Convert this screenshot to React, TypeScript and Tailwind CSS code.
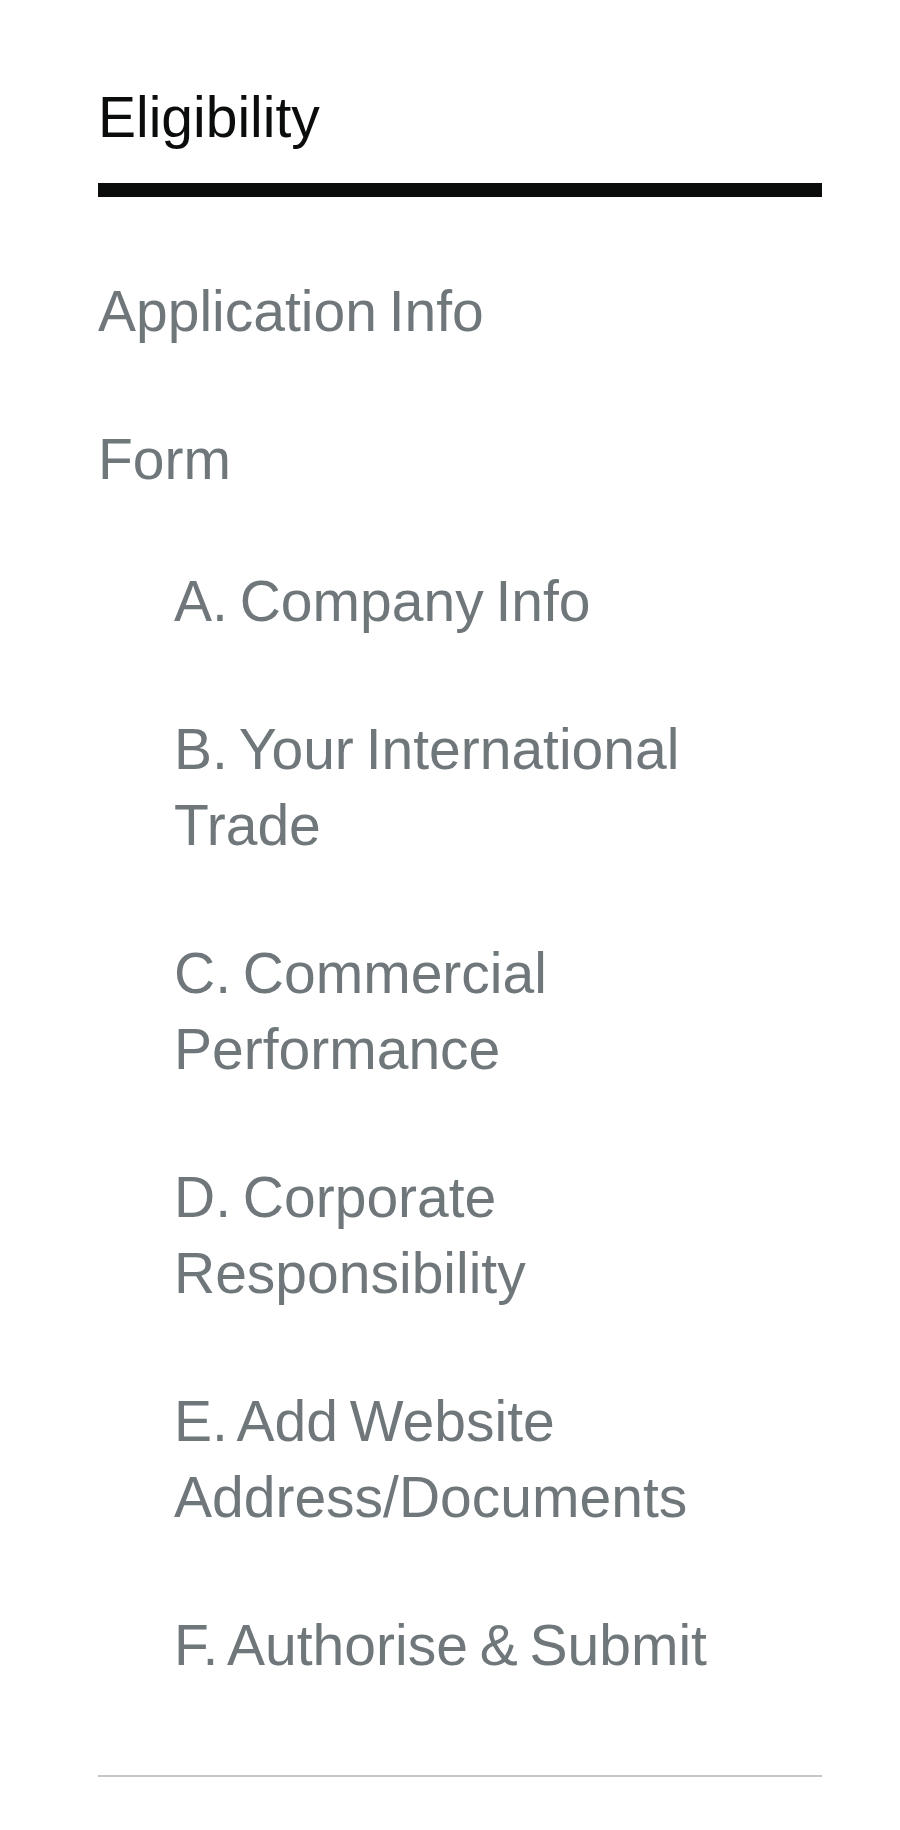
import React from "react";

const font = { fontFamily: '"Liberation Sans", Arial, sans-serif' };

const top = ["Application Info", "Form"];
const subs = [
  "A. Company Info",
  "B. Your International Trade",
  "C. Commercial Performance",
  "D. Corporate Responsibility",
  "E. Add Website Address/Documents",
  "F. Authorise & Submit",
];

export default function App() {
  return (
    <div className="min-h-[1830px] w-[900px] bg-white" style={font}>
      <nav className="w-[822px] pl-[98px] pt-[79px] text-[57px] leading-[76px] [word-spacing:-4px]">
        <div className="border-b-[14px] border-[#0b0c0c] pb-[28px] text-[#0b0c0c]">
          Eligibility
        </div>
        <ul className="mt-[76px] flex flex-col gap-[72px] text-[#6f777b]">
          {top.map((t) => (
            <li key={t}>{t}</li>
          ))}
        </ul>
        <ul className="mt-[66px] flex w-[640px] flex-col gap-[72px] pl-[76px] text-[#6f777b] box-content">
          {subs.map((t) => (
            <li key={t}>{t}</li>
          ))}
        </ul>
        <div className="mt-[92px] h-[2px] bg-[#c4c6c8]" />
      </nav>
    </div>
  );
}
